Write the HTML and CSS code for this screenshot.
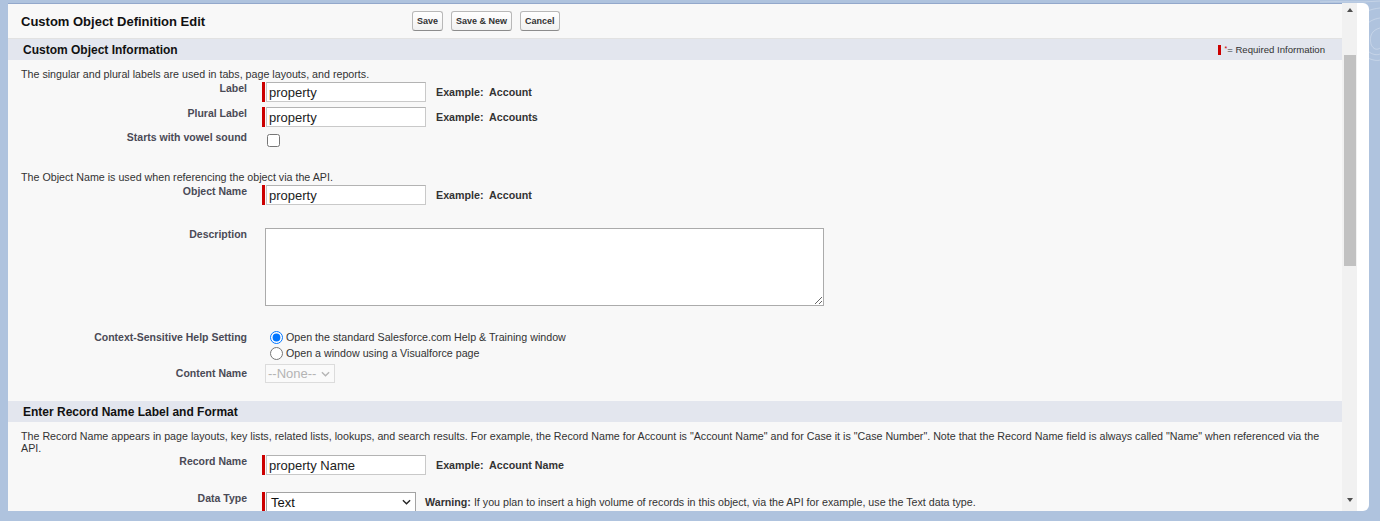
FILE: index.html
```html
<!DOCTYPE html>
<html lang="en">
<head>
<meta charset="utf-8">
<title>Custom Object Definition Edit</title>
<link rel="stylesheet" href="styles.css">
</head>
<body>
<svg class="swirl" viewBox="0 0 60 120" aria-hidden="true">
  <path d="M60 8 C40 10 30 22 34 40 C38 58 56 62 60 60" />
  <path d="M60 18 C46 20 40 30 43 42 C46 54 56 56 60 54" />
  <path d="M60 28 C52 30 49 36 51 44 C53 50 58 50 60 48" />
  <path d="M0 2 C20 1 40 3 60 1" />
</svg>
<div class="frame">
  <div class="viewport">
    <div class="page-header">
      <h2 class="title">Custom Object Definition Edit</h2>
      <div class="buttons">
        <button class="btn" type="button">Save</button>
        <button class="btn" type="button">Save &amp; New</button>
        <button class="btn" type="button">Cancel</button>
      </div>
    </div>

    <div class="section-head">
      <h3>Custom Object Information</h3>
      <span class="req-legend"><span class="req-mark"></span><span class="star">*</span>= Required Information</span>
    </div>
    <div class="section-body">
      <p class="note first">The singular and plural labels are used in tabs, page layouts, and reports.</p>
      <div class="row">
        <label class="lbl">Label</label>
        <div class="val"><span class="req"></span><input class="txt" type="text" value="property"><span class="example">Example:&nbsp; Account</span></div>
      </div>
      <div class="row">
        <label class="lbl">Plural Label</label>
        <div class="val"><span class="req"></span><input class="txt" type="text" value="property"><span class="example">Example:&nbsp; Accounts</span></div>
      </div>
      <div class="row row-check">
        <label class="lbl">Starts with vowel sound</label>
        <div class="val noreq"><input class="check" type="checkbox"></div>
      </div>
      <p class="note note-api">The Object Name is used when referencing the object via the API.</p>
      <div class="row">
        <label class="lbl">Object Name</label>
        <div class="val"><span class="req"></span><input class="txt" type="text" value="property"><span class="example">Example:&nbsp; Account</span></div>
      </div>
      <div class="row row-desc">
        <label class="lbl">Description</label>
        <div class="val noreq"><textarea class="area"></textarea></div>
      </div>
      <div class="row row-help">
        <label class="lbl">Context-Sensitive Help Setting</label>
        <div class="val noreq radios">
          <label class="radio-line"><input type="radio" name="help" checked>Open the standard Salesforce.com Help &amp; Training window</label>
          <label class="radio-line"><input type="radio" name="help">Open a window using a Visualforce page</label>
        </div>
      </div>
      <div class="row row-content">
        <label class="lbl">Content Name</label>
        <div class="val noreq">
          <span class="select disabled"><span>--None--</span><svg class="chev" viewBox="0 0 10 6"><polyline points="1,1 5,5 9,1"/></svg></span>
        </div>
      </div>
    </div>

    <div class="section-head">
      <h3>Enter Record Name Label and Format</h3>
    </div>
    <div class="section-body">
      <p class="note record">The Record Name appears in page layouts, key lists, related lists, lookups, and search results. For example, the Record Name for Account is "Account Name" and for Case it is "Case Number". Note that the Record Name field is always called "Name" when referenced via the API.</p>
      <div class="row">
        <label class="lbl">Record Name</label>
        <div class="val"><span class="req"></span><input class="txt" type="text" value="property Name"><span class="example">Example:&nbsp; Account Name</span></div>
      </div>
      <div class="row row-type">
        <label class="lbl">Data Type</label>
        <div class="val"><span class="req"></span>
          <span class="select type"><span>Text</span><svg class="chev" viewBox="0 0 10 6"><polyline points="1,1 5,5 9,1"/></svg></span>
          <span class="warning"><b>Warning:</b> If you plan to insert a high volume of records in this object, via the API for example, use the Text data type.</span>
        </div>
      </div>
    </div>
  </div>
  <div class="scrollbar">
    <span class="arrow up"></span>
    <span class="thumb"></span>
    <span class="track-rest"></span>
    <span class="arrow down"></span>
  </div>
</div>
</body>
</html>
```

FILE: styles.css
```css
html, body {
  margin: 0;
  height: 100%;
}

body {
  background: #afc3de;
  font-family: "Liberation Sans", Arial, sans-serif;
  overflow: hidden;
  position: relative;
}

.swirl {
  position: absolute;
  right: 0;
  top: 0;
  width: 60px;
  height: 120px;
  fill: none;
  stroke: #ffffff;
  stroke-opacity: 0.35;
  stroke-width: 0.8;
}

.frame {
  position: relative;
  display: flex;
  margin: 3px 0 0 8px;
  width: 1361px;
  height: 508px;
  background: #ffffff;
  border-radius: 0 6px 6px 0;
  overflow: hidden;
}

.viewport {
  flex: none;
  width: 1334px;
  height: 100%;
  box-sizing: border-box;
  overflow: hidden;
  border-top: 1px solid #93a8cb;
  background: #f8f8f8;
}

/* header */
.page-header {
  display: flex;
  align-items: center;
  height: 34px;
  padding-left: 13px;
  border-bottom: 1px solid #e2e2e2;
  background: #f8f8f8;
}

.title {
  margin: 0;
  width: 391px;
  font-size: 13px;
  font-weight: bold;
  color: #111;
}

.buttons {
  display: flex;
  gap: 8px;
}

.btn {
  height: 20px;
  padding: 0 4px;
  font-family: "Liberation Sans", Arial, sans-serif;
  font-size: 9px;
  font-weight: bold;
  color: #333;
  background: linear-gradient(#ffffff, #f1f1f1);
  border: 1px solid #b8b8b8;
  border-bottom-color: #8c8c8c;
  border-radius: 3px;
}

/* section headers */
.section-head {
  display: flex;
  align-items: center;
  justify-content: space-between;
  height: 21px;
  padding: 0 17px 0 15px;
  background: #e3e6ee;
}

.section-head h3 {
  margin: 0;
  font-size: 12px;
  font-weight: bold;
  color: #111;
}

.req-legend {
  display: flex;
  align-items: center;
  font-size: 9.6px;
  color: #333;
}

.req-mark {
  display: inline-block;
  width: 3px;
  height: 10px;
  background: #cc0000;
  margin-right: 3px;
}

.star {
  color: #cc0000;
  font-size: 7px;
  align-self: flex-start;
  margin-top: 1px;
}

/* body */
.section-body {
  padding-bottom: 14px;
}

.note {
  margin: 0 0 0 13px;
  font-size: 10.7px;
  line-height: 13px;
  color: #333;
}

.note.first {
  padding-top: 8px;
}

.note.note-api {
  margin-top: 24px;
}

.note.record {
  padding-top: 8px;
  width: 1314px;
  line-height: 12px;
}

.row {
  display: grid;
  grid-template-columns: 239px 1fr;
  column-gap: 15px;
  padding: 1px 0 4px;
}

.lbl {
  text-align: right;
  font-size: 10.5px;
  font-weight: bold;
  line-height: 12px;
  color: #4a4a56;
}

.val {
  display: flex;
  align-items: center;
  align-self: start;
}

.val.noreq {
  padding-left: 3px;
}

.req {
  width: 3px;
  height: 20px;
  background: #cc0000;
  margin-right: 1px;
  flex: none;
}

.txt {
  width: 160px;
  height: 20px;
  box-sizing: border-box;
  margin: 0;
  padding: 0 2px;
  border: 1px solid #c9c9c9;
  border-top-color: #b3b3b3;
  background: #fff;
  font-family: "Liberation Sans", Arial, sans-serif;
  font-size: 13px;
  color: #222;
}

.example {
  margin-left: 10px;
  font-size: 10.7px;
  font-weight: bold;
  color: #333;
}

.row-check {
  padding: 0;
  height: 16px;
}

.check {
  width: 13px;
  height: 13px;
  margin: 3px 0 0 2px;
}

.row-desc {
  margin-top: 18px;
}

.row-desc .lbl {
  padding-top: 0;
}

.area {
  display: block;
  width: 559px;
  height: 78px;
  box-sizing: border-box;
  margin: 0;
  border: 1px solid #ababab;
  background: #fff;
}

.row-help {
  margin-top: 18px;
  padding-bottom: 2px;
}

.row-help .lbl {
  padding-top: 2px;
}

.radios {
  flex-direction: column;
  align-items: flex-start;
}

.radio-line {
  display: flex;
  align-items: center;
  height: 16px;
  font-size: 10.7px;
  color: #333;
}

.radio-line input {
  width: 13px;
  height: 13px;
  margin: 0 3px 0 5px;
}

.row-content .lbl {
  padding-top: 3px;
}

.select {
  display: flex;
  align-items: center;
  justify-content: space-between;
  box-sizing: border-box;
  height: 19px;
  font-size: 13px;
  background: #fff;
}

.select.disabled {
  width: 70px;
  padding: 0 4px 0 2px;
  border: 1px solid #dcdcdc;
  background: #fafafa;
  color: #b4b4b4;
}

.select.disabled .chev {
  stroke: #b4b4b4;
}

.chev {
  width: 9px;
  height: 6px;
  fill: none;
  stroke: #222;
  stroke-width: 1.5;
}

.row-type {
  margin-top: 12px;
}

.select.type {
  width: 150px;
  height: 20px;
  padding: 0 4px;
  border: 1px solid #a3a3a3;
  color: #111;
}

.warning {
  margin-left: 9px;
  font-size: 10.7px;
  color: #333;
}

.warning b {
  font-weight: bold;
}

/* scrollbar */
.scrollbar {
  flex: none;
  width: 15px;
  height: 100%;
  display: flex;
  flex-direction: column;
  align-items: center;
  background: #f1f1f1;
}

.arrow {
  flex: none;
  width: 15px;
  height: 13px;
  display: flex;
  align-items: center;
  justify-content: center;
}

.arrow::before {
  content: "";
  border-left: 3.5px solid transparent;
  border-right: 3.5px solid transparent;
}

.arrow.up::before {
  border-bottom: 4px solid #505050;
}

.arrow.down {
  margin-bottom: 5px;
}

.arrow.down::before {
  border-top: 4px solid #505050;
}

.thumb {
  flex: none;
  width: 12px;
  height: 211px;
  margin-top: 39px;
  background: #c1c1c1;
}

.track-rest {
  flex: 1;
}
```
